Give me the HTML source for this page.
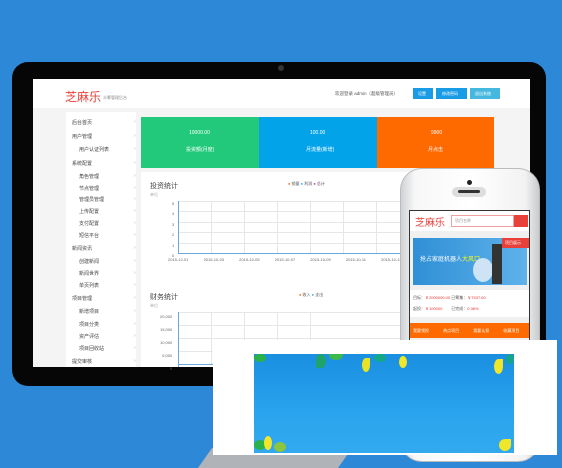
<!DOCTYPE html>
<html><head><meta charset="utf-8"><style>
*{margin:0;padding:0;box-sizing:border-box}
body{width:562px;height:460px;overflow:hidden;background:#2d88d8;font-family:"Liberation Sans","Noto Sans CJK SC",sans-serif;position:relative}
.a{position:absolute}
.t{position:absolute;font-size:5px;color:#555;white-space:nowrap}
.side div{position:absolute;font-size:5px;color:#444;white-space:nowrap}
.side span{position:absolute;left:62px;color:#aaa}
.g{position:absolute;background:#e6e6e6}
</style></head><body>
<!-- stand -->
<div class="a" style="left:205px;top:448px;width:140px;height:20px;background:#b0b3b7;transform:skewX(-35deg)"></div>
<!-- monitor -->
<div class="a" style="left:12px;top:62px;width:534px;height:324px;background:#060606;border-radius:16px"></div>
<div class="a" style="left:278px;top:65px;width:6px;height:6px;border-radius:50%;background:#333"></div>
<div class="a" style="left:33px;top:79px;width:497px;height:288px;background:#f4f4f4"></div>
<div class="a" style="left:33px;top:79px;width:497px;height:29px;background:#fff"></div>
<div class="a" style="left:65px;top:88px;font-size:12px;color:#e8413a">芝麻乐</div>
<div class="t" style="left:103px;top:95px;color:#888;font-size:4px">众筹管理后台</div>
<div class="t" style="left:335px;top:91px;font-size:4.5px">欢迎登录 admin（超级管理员）</div>
<div class="a" style="left:413px;top:88px;width:20px;height:11px;background:#1a9be6"></div>
<div class="a" style="left:436px;top:88px;width:31px;height:11px;background:#1a9be6"></div>
<div class="a" style="left:470px;top:88px;width:30px;height:11px;background:#46b8e0"></div>
<div class="t" style="left:418px;top:91px;color:#fff;font-size:4px">设置</div>
<div class="t" style="left:442px;top:91px;color:#fff;font-size:4px">修改密码</div>
<div class="t" style="left:475px;top:91px;color:#fff;font-size:4px">退出系统</div>
<!-- sidebar -->
<div class="a side" style="left:66px;top:112px;width:70px;height:255px;background:#fff">
<div style="left:6px;top:7px">后台首页<span>›</span></div>
<div style="left:6px;top:21px">用户管理<span>›</span></div>
<div style="left:13px;top:34px">用户认证列表<span style="left:55px">›</span></div>
<div style="left:6px;top:48px">系统配置<span>›</span></div>
<div style="left:13px;top:61px">角色管理<span style="left:55px">›</span></div>
<div style="left:13px;top:73px">节点管理<span style="left:55px">›</span></div>
<div style="left:13px;top:84px">管理员管理<span style="left:55px">›</span></div>
<div style="left:13px;top:96px">上传配置<span style="left:55px">›</span></div>
<div style="left:13px;top:108px">支付配置<span style="left:55px">›</span></div>
<div style="left:13px;top:120px">短信平台<span style="left:55px">›</span></div>
<div style="left:6px;top:133px">新闻资讯<span>›</span></div>
<div style="left:13px;top:146px">创建新闻<span style="left:55px">›</span></div>
<div style="left:13px;top:158px">新闻世界<span style="left:55px">›</span></div>
<div style="left:13px;top:170px">单页列表<span style="left:55px">›</span></div>
<div style="left:6px;top:183px">项目管理<span>›</span></div>
<div style="left:13px;top:196px">新增项目<span style="left:55px">›</span></div>
<div style="left:13px;top:209px">项目分类<span style="left:55px">›</span></div>
<div style="left:13px;top:221px">资产评估<span style="left:55px">›</span></div>
<div style="left:13px;top:233px">项目回收站<span style="left:55px">›</span></div>
<div style="left:6px;top:246px">提交审核<span>›</span></div>
</div>
<!-- stats -->
<div class="a" style="left:141px;top:117px;width:118px;height:51px;background:#22c97a"></div>
<div class="a" style="left:259px;top:117px;width:118px;height:51px;background:#03a3ea"></div>
<div class="a" style="left:377px;top:117px;width:117px;height:51px;background:#ff6a00"></div>
<div class="t" style="left:189px;top:130px;color:#fff">10000.00</div>
<div class="t" style="left:186px;top:146px;color:#fff">投资额(月度)</div>
<div class="t" style="left:310px;top:130px;color:#fff">100.00</div>
<div class="t" style="left:306px;top:146px;color:#fff">月流量(新增)</div>
<div class="t" style="left:431px;top:130px;color:#fff">9900</div>
<div class="t" style="left:428px;top:146px;color:#fff">月点击</div>
<!-- charts -->
<div class="a" style="left:141px;top:172px;width:389px;height:195px;background:#fff"></div>
<div class="a" style="left:150px;top:181px;font-size:7px;color:#444">投资统计</div>
<div class="t" style="left:150px;top:192px;color:#aaa;font-size:4px">单位</div>
<div class="t" style="left:288px;top:181px;font-size:4px"><span style="color:#f60">●</span> 销量 <span style="color:#3ae">●</span> 利润 <span style="color:#c3c">●</span> 总计</div>
<div class="g" style="left:178px;top:201px;width:222px;height:1px"></div>
<div class="g" style="left:178px;top:211px;width:222px;height:1px"></div>
<div class="g" style="left:178px;top:222px;width:222px;height:1px"></div>
<div class="g" style="left:178px;top:232px;width:222px;height:1px"></div>
<div class="g" style="left:178px;top:243px;width:222px;height:1px"></div>
<div class="g" style="left:211px;top:201px;width:1px;height:52px"></div>
<div class="g" style="left:244px;top:201px;width:1px;height:52px"></div>
<div class="g" style="left:277px;top:201px;width:1px;height:52px"></div>
<div class="g" style="left:310px;top:201px;width:1px;height:52px"></div>
<div class="g" style="left:343px;top:201px;width:1px;height:52px"></div>
<div class="g" style="left:376px;top:201px;width:1px;height:52px"></div>
<div class="a" style="left:178px;top:201px;width:1px;height:53px;background:#6aa8e0"></div>
<div class="a" style="left:178px;top:253px;width:222px;height:1px;background:#6aa8e0"></div>
<div class="t" style="left:172px;top:199px;font-size:4px;line-height:10.4px;color:#666">5<br>4<br>3<br>2<br>1<br>0</div>
<div class="t" style="left:168px;top:257px;font-size:4px;color:#666;word-spacing:14px">2015-12-01 2015-10-03 2015-10-05 2015-10-07 2015-10-09 2015-10-11 2015-10-13</div>
<div class="a" style="left:150px;top:292px;font-size:7px;color:#444">财务统计</div>
<div class="t" style="left:150px;top:303px;color:#aaa;font-size:4px">单位</div>
<div class="t" style="left:299px;top:292px;font-size:4px"><span style="color:#f60">●</span> 收入 <span style="color:#3ae">●</span> 支出</div>
<div class="g" style="left:178px;top:312px;width:222px;height:1px"></div>
<div class="g" style="left:178px;top:325px;width:222px;height:1px"></div>
<div class="g" style="left:178px;top:338px;width:222px;height:1px"></div>
<div class="g" style="left:178px;top:351px;width:222px;height:1px"></div>
<div class="g" style="left:211px;top:312px;width:1px;height:53px"></div>
<div class="g" style="left:244px;top:312px;width:1px;height:53px"></div>
<div class="g" style="left:277px;top:312px;width:1px;height:53px"></div>
<div class="g" style="left:310px;top:312px;width:1px;height:53px"></div>
<div class="a" style="left:178px;top:312px;width:1px;height:55px;background:#6aa8e0"></div>
<div class="a" style="left:178px;top:364px;width:222px;height:1px;background:#6aa8e0"></div>
<div class="t" style="left:160px;top:310px;font-size:4px;line-height:13px;color:#666;text-align:right">20,000<br>15,000<br>10,000<br>&nbsp;5,000<br>&nbsp;&nbsp;&nbsp;&nbsp;&nbsp;0</div>
<!-- phone -->
<div class="a" style="left:400px;top:168px;width:140px;height:294px;background:linear-gradient(90deg,#cfd2d5,#f7f7f7 10%,#fff 50%,#f2f2f2 90%,#c8cbce);border-radius:22px;border:1px solid #bbb"></div>
<div class="a" style="left:467px;top:180px;width:5px;height:5px;border-radius:50%;background:#222"></div>
<div class="a" style="left:452px;top:187px;width:34px;height:10px;border-radius:6px;background:#ddd"></div>
<div class="a" style="left:458px;top:190px;width:22px;height:3px;border-radius:2px;background:#333"></div>
<div class="a" style="left:409px;top:210px;width:121px;height:140px;background:#f0f0f0;border:1px solid #333"></div>
<div class="a" style="left:410px;top:211px;width:119px;height:20px;background:#fff"></div>
<div class="a" style="left:415px;top:214px;font-size:10px;color:#e8413a">芝麻乐</div>
<div class="a" style="left:451px;top:215px;width:63px;height:12px;border:1px solid #f0a0a0;background:#fff"></div>
<div class="t" style="left:455px;top:218px;color:#999;font-size:4px">项目名称</div>
<div class="a" style="left:514px;top:215px;width:14px;height:12px;background:#e8413a"></div>
<div class="a" style="left:413px;top:238px;width:114px;height:47px;background:linear-gradient(90deg,#2f8fd6,#5fb2ea)"></div>
<div class="t" style="left:420px;top:254px;color:#fff;font-size:6px">抢占家庭机器人<span style="color:#ff0">大风口</span></div>
<div class="a" style="left:473px;top:258px;width:20px;height:24px;border-radius:50%;background:#cfe3f7"></div>
<div class="a" style="left:492px;top:244px;width:10px;height:40px;background:#333"></div>
<div class="a" style="left:502px;top:238px;width:27px;height:10px;background:#e8413a"></div>
<div class="t" style="left:505px;top:240px;color:#fff;font-size:4px">项目展示</div>
<div class="a" style="left:410px;top:290px;width:119px;height:27px;background:#fff"></div>
<div class="t" style="left:413px;top:295px;font-size:4px">目标：<span style="color:#e33">￥2000000.00</span> 已筹集：<span style="color:#e33">￥7537.60</span></div>
<div class="t" style="left:413px;top:306px;font-size:4px">起投：<span style="color:#e33">￥100000</span> &nbsp;&nbsp;&nbsp;&nbsp;&nbsp;&nbsp;&nbsp;已完成：<span style="color:#e33">0.38%</span></div>
<div class="a" style="left:410px;top:323px;width:119px;height:15px;background:#ff6a00"></div>
<div class="t" style="left:413px;top:328px;color:#fff;font-size:4px;word-spacing:13px">我要领投 热点项目 我要认投 收藏项目</div>
<!-- overlay box -->
<div class="a" style="left:213px;top:340px;width:344px;height:115px;background:#fff"></div>
<div class="a" style="left:254px;top:354px;width:260px;height:99px;background:linear-gradient(180deg,#1a8fe0,#2aa4ee 60%,#33a9ef);overflow:hidden">
<div class="a" style="left:0;top:0;width:12px;height:8px;border-radius:50%;background:#2bb14a"></div>
<div class="a" style="left:62px;top:0;width:10px;height:14px;border-radius:50% 50% 50% 0;background:#1ea36a"></div>
<div class="a" style="left:75px;top:-4px;width:14px;height:10px;border-radius:50%;background:#3cb94a"></div>
<div class="a" style="left:108px;top:4px;width:8px;height:14px;border-radius:50% 0 50% 50%;background:#e8e323"></div>
<div class="a" style="left:120px;top:0;width:12px;height:8px;border-radius:50%;background:#14a88a"></div>
<div class="a" style="left:145px;top:2px;width:8px;height:12px;border-radius:50%;background:#f0e62a"></div>
<div class="a" style="left:240px;top:5px;width:9px;height:15px;border-radius:50% 0 50% 50%;background:#f0e62a"></div>
<div class="a" style="left:252px;top:0;width:8px;height:10px;border-radius:50%;background:#16a48a"></div>
<div class="a" style="left:0;top:86px;width:12px;height:10px;border-radius:50%;background:#2bb14a"></div>
<div class="a" style="left:10px;top:82px;width:8px;height:14px;border-radius:50%;background:#f0e62a"></div>
<div class="a" style="left:20px;top:88px;width:12px;height:10px;border-radius:50%;background:#8cc63e"></div>
<div class="a" style="left:245px;top:85px;width:12px;height:12px;border-radius:50% 0 50% 50%;background:#f0e62a"></div>
</div>
</body></html>
